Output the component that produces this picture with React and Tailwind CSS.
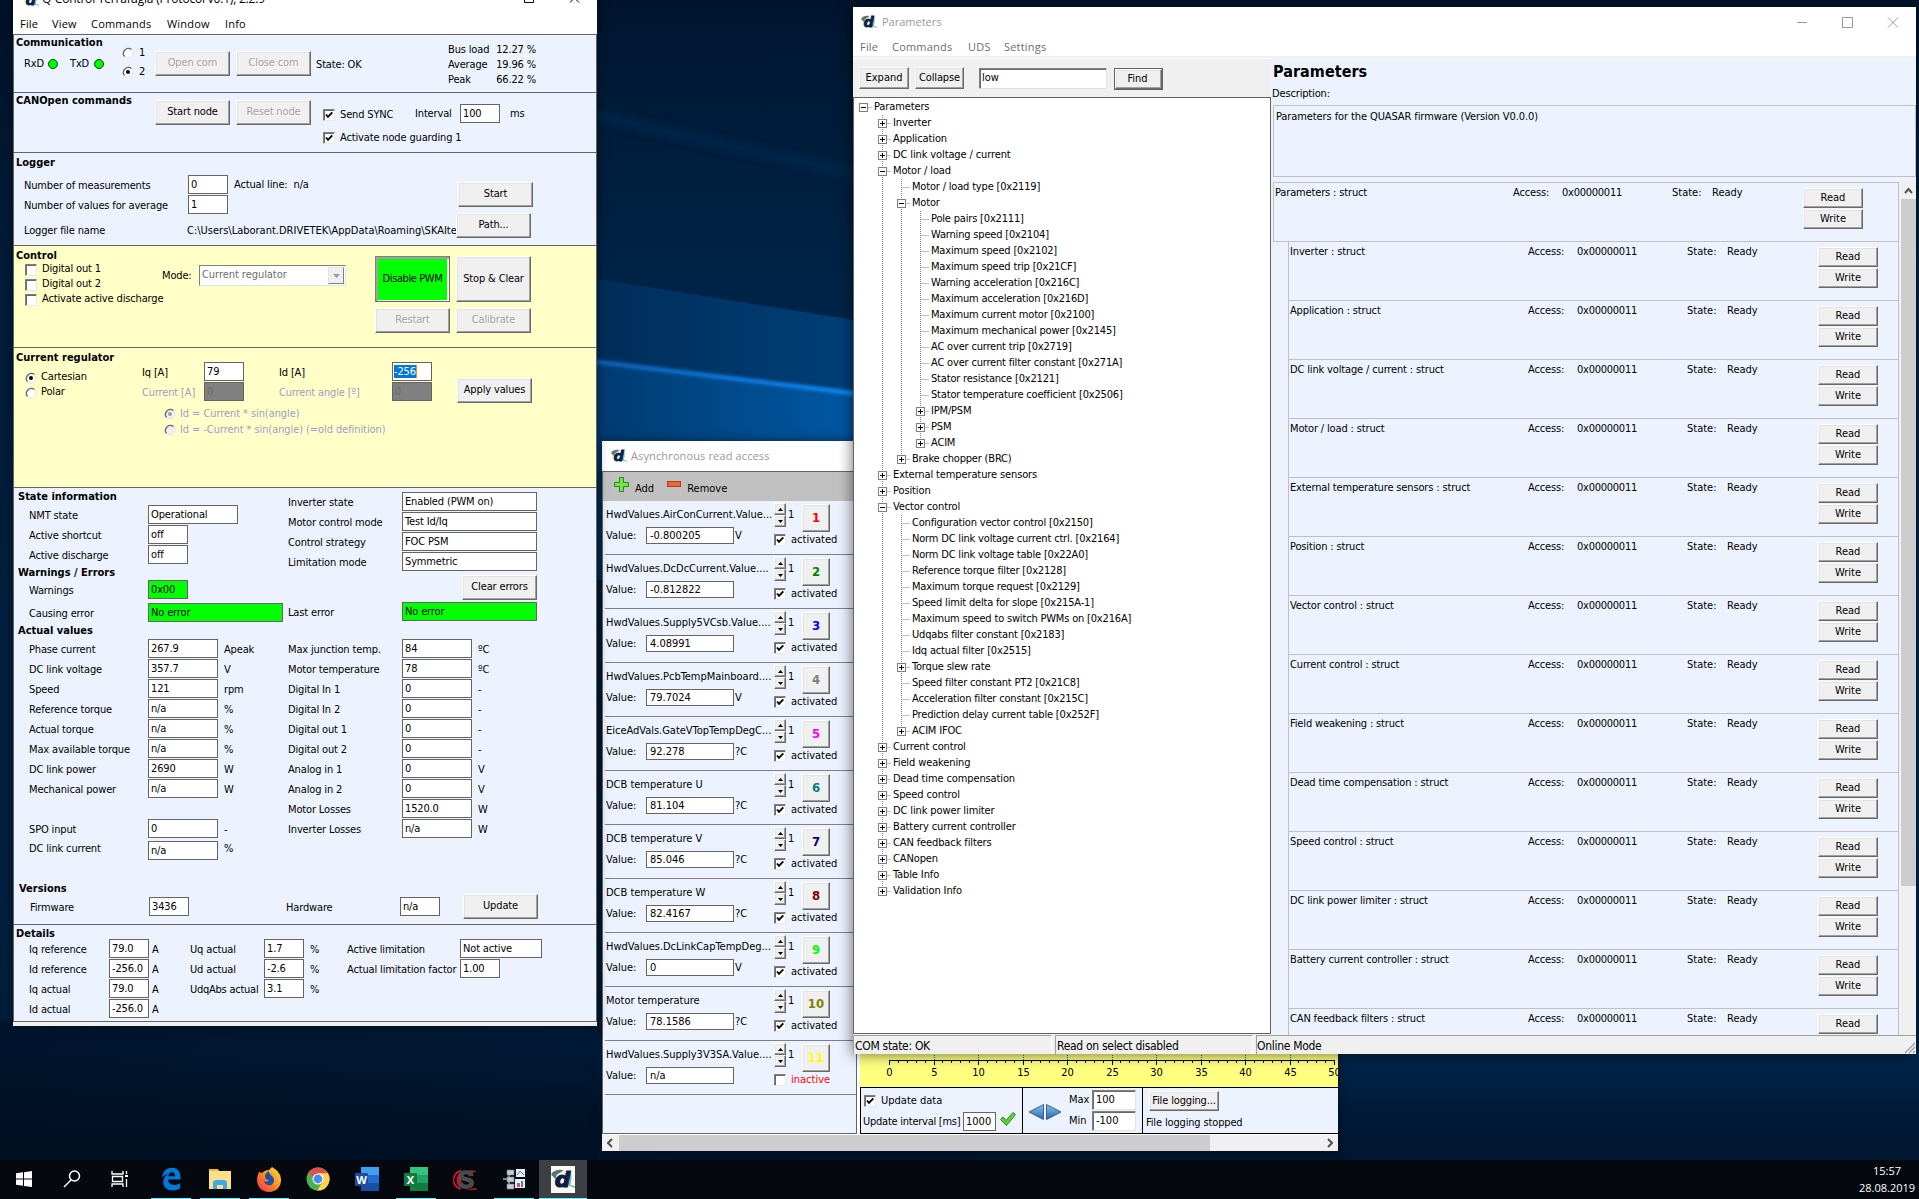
import React from "react";

const cx = (...c) => c.filter(Boolean).join(" ");

// ---------- shared controls ----------

function Logo({ size = 16 }) {
  return (
    <svg width={size} height={size} viewBox="0 0 16 16" className="shrink-0 overflow-visible">
      <path d="M0 5C1.500 2 5.500 1.300 8.500 2.200L5.500 4.200C3.500 5 3 6.500 3.500 8.500z" fill="#4f7d74" />
      <path d="M12.500 3.500c1 2.500 1 5-.3 8.500M12 12l4 1.500" stroke="#8fb0a8" strokeWidth="1" fill="none" />
      <text x="2.500" y="13" fontFamily="DejaVu Sans" fontSize="14.500" fontWeight="bold" fontStyle="italic" fill="#0a1f44" stroke="#0a1f44" strokeWidth=".8">d</text>
    </svg>
  );
}

function Button({ className, disabled, children }) {
  return (
    <button
      className={cx(
        "shrink-0 flex items-center justify-center whitespace-nowrap border border-t-white border-l-white border-r-[#696969] border-b-[#696969] bg-[#f0f0f0] shadow-[inset_-1px_-1px_0_#a0a0a0,inset_1px_1px_0_#e3e3e3]",
        disabled && "text-[#a0a0a0] [text-shadow:1px_1px_0_#fff]",
        className
      )}
    >
      {children}
    </button>
  );
}

function Box({ className = "w-10", children }) {
  return (
    <div className={cx("shrink-0 h-[19px] border border-[#646464] pl-[2px] leading-[17px] whitespace-nowrap overflow-hidden", className, !/bg-/.test(className) && "bg-white")}>
      {children}
    </div>
  );
}

function Check({ checked }) {
  return (
    <span className="shrink-0 w-3 h-3 border border-t-[#808080] border-l-[#808080] border-r-[#e8e8e8] border-b-[#e8e8e8] bg-white shadow-[inset_1px_1px_0_#696969]">
      {checked && (
        <svg width="10" height="10" viewBox="0 0 10 10" className="block">
          <path d="M2 4.500L4 6.800 8.300 2.300" stroke="#000" strokeWidth="1.900" fill="none" />
        </svg>
      )}
    </span>
  );
}

function Radio({ checked, disabled }) {
  return (
    <svg width="12" height="12" viewBox="0 0 12 12" className="shrink-0">
      <circle cx="6" cy="6" r="5" fill={disabled ? "#f0f0f0" : "#fff"} stroke="#e3e3e3" />
      <path d="M2.500 9.500A5 5 0 0 1 9.500 2.500" stroke="#696969" strokeWidth="1.300" fill="none" />
      {checked && <circle cx="6" cy="6" r="2" fill={disabled ? "#a0a0a0" : "#000"} />}
    </svg>
  );
}

function Title({ className, children }) {
  return <div className={cx("font-bold tracking-normal whitespace-nowrap", className)}>{children}</div>;
}

const MUTED = "text-[#a0a0a0] [text-shadow:1px_1px_0_#fff]";

// ---------- main window ----------

function Section({ className, children }) {
  return <section className={cx("flex border-t border-[#646464]", className)}>{children}</section>;
}

function Field({ label, value, unit, box = "w-10", labelClass = "w-[119px]", className }) {
  return (
    <div className={cx("flex h-5", className)}>
      <span className={cx("shrink-0 leading-[21px]", labelClass)}>{label}</span>
      <Box className={box}>{value}</Box>
      {unit && <span className="ml-1.5 leading-[21px]">{unit}</span>}
    </div>
  );
}

function Communication() {
  return (
    <Section className="h-[58px]">
      <div className="w-[108px] pl-0.5">
        <Title className="h-[17px] leading-[15px]">Communication</Title>
        <div className="flex items-center pl-2 mt-1 h-4">
          <span className="w-[24px]">RxD</span>
          <span className="w-2.5 h-2.5 rounded-full border border-[#004000] bg-[#00ff00]" />
          <span className="w-[24px] ml-3">TxD</span>
          <span className="w-2.5 h-2.5 rounded-full border border-[#004000] bg-[#00ff00]" />
        </div>
      </div>
      <div className="w-[33px] pt-2.5">
        <div className="flex items-center gap-[5px] h-4"><Radio /> 1</div>
        <div className="flex items-center gap-[5px] h-4 mt-[3px]"><Radio checked /> 2</div>
      </div>
      <div className="flex gap-1.5 pt-4">
        <Button disabled className="w-[75px] h-[25px]">Open com</Button>
        <Button disabled className="w-[75px] h-[25px]">Close com</Button>
        <span className="leading-[27px] -ml-px">State: OK</span>
      </div>
      <div className="ml-auto mr-[60px] w-[88px] pt-[7px]">
        {[["Bus load", "12.27 %"], ["Average", "19.96 %"], ["Peak", "66.22 %"]].map(([k, v]) => (
          <div key={k} className="flex justify-between h-[15px] leading-[15px]"><span>{k}</span><span>{v}</span></div>
        ))}
      </div>
    </Section>
  );
}

function CanOpen() {
  return (
    <Section className="h-[60px]">
      <Title className="w-[141px] pl-0.5 leading-[15px]">CANOpen commands</Title>
      <div className="flex gap-1.5 pt-[7px]">
        <Button className="w-[75px] h-[25px]">Start node</Button>
        <Button disabled className="w-[75px] h-[25px]">Reset node</Button>
      </div>
      <div className="pl-3 pt-[11px]">
        <div className="flex h-5">
          <div className="flex w-[92px] items-center gap-[5px] pt-0.5"><Check checked /><span>Send SYNC</span></div>
          <span className="w-[45px] leading-5">Interval</span>
          <Box>100</Box>
          <span className="ml-2.5 leading-5">ms</span>
        </div>
        <div className="flex items-center gap-[5px] h-5 mt-1"><Check checked /><span>Activate node guarding 1</span></div>
      </div>
    </Section>
  );
}

function Logger() {
  return (
    <Section className="h-[93px]">
      <div className="w-[442px] pl-2.5">
        <Title className="-ml-2 h-[22px] pt-0.5 leading-4">Logger</Title>
        <div className="flex">
          <Field label="Number of measurements" value="0" labelClass="w-[164px]" />
          <span className="ml-1.5 leading-5 whitespace-pre">Actual line:  n/a</span>
        </div>
        <Field label="Number of values for average" value="1" labelClass="w-[164px]" />
        <div className="flex h-5 mt-[5px] leading-5 pt-px">
          <span className="shrink-0 w-[163px]">Logger file name</span>
          <span className="flex-1 overflow-hidden whitespace-nowrap tracking-normal">C:\Users\Laborant.DRIVETEK\AppData\Roaming\SKAIte</span>
        </div>
      </div>
      <div className="pt-[29px]">
        <Button className="w-[75px] h-[25px] ml-0.5">Start</Button>
        <Button className="w-[75px] h-[25px] mt-1.5">Path...</Button>
      </div>
    </Section>
  );
}

function Control() {
  return (
    <Section className="h-[102px] bg-[#ffffc8]">
      <div className="w-[148px] pl-[11px]">
        <Title className="-ml-[9px] h-4 leading-[19px]">Control</Title>
        {["Digital out 1", "Digital out 2", "Activate active discharge"].map((t) => (
          <div key={t} className="flex items-center gap-[5px] h-[15px] whitespace-nowrap"><Check /><span>{t}</span></div>
        ))}
      </div>
      <div className="flex w-[213px] h-[21px] mt-[19px]">
        <span className="w-[37px] leading-[21px]">Mode:</span>
        <div className="flex w-[147px] justify-between items-center border border-[#808080] border-r-[#e3e3e3] border-b-[#e3e3e3] bg-white pl-0.5 pr-px text-[#6d6d6d] tracking-[-0.05px]">
          <span>Current regulator</span>
          <span className="w-4 h-[17px] flex items-center justify-center bg-[#f0f0f0] border border-t-[#e3e3e3] border-l-[#e3e3e3] border-r-[#808080] border-b-[#808080]">
            <svg width="7" height="4"><path d="M0 0h7L3.500 4z" fill="#9a9a9a" /></svg>
          </span>
        </div>
      </div>
      <div className="grid grid-cols-[75px_75px] grid-rows-[46px_25px] gap-1.5 pt-[10px]">
        <div className="flex border border-r-[#696969] border-b-[#696969] border-[#808080] bg-white shadow-[inset_2px_2px_0_#a0a0a0] pt-0.5 pl-0.5 pr-0.5 pb-px">
          <div className="flex-1 bg-[#00ff00] flex items-center justify-center whitespace-nowrap tracking-[-0.4px]">Disable PWM</div>
        </div>
        <Button>Stop &amp; Clear</Button>
        <Button disabled>Restart</Button>
        <Button disabled>Calibrate</Button>
      </div>
    </Section>
  );
}

function CurrentRegulator() {
  return (
    <Section className="h-[140px] bg-[#ffffc8]">
      <div className="w-[128px] pl-[11px]">
        <Title className="-ml-[9px] h-[22px] leading-[19px]">Current regulator</Title>
        <div className="flex items-center gap-1 h-[15px]"><Radio checked /><span>Cartesian</span></div>
        <div className="flex items-center gap-1 h-[15px]"><Radio /><span>Polar</span></div>
      </div>
      <div className="w-[315px] pt-3.5">
        <div className="flex">
          <div className="w-[137px]">
            <Field label="Iq [A]" value="79" labelClass="w-[62px]" />
            <Field label={<span className={MUTED}>Current [A]</span>} value="0" box="w-10 bg-[#808080] text-[#696969]" labelClass="w-[62px]" />
          </div>
          <div>
            <Field label="Id [A]" value={<span className="bg-[#0078d7] text-white border-r border-[#ff8728] -ml-px inline-block h-[13px] mt-px leading-[13px]">-256</span>} labelClass="w-[113px]" />
            <Field label={<span className={MUTED}>Current angle [º]</span>} value="0" box="w-10 bg-[#808080] text-[#696969]" labelClass="w-[113px]" />
          </div>
        </div>
        <div className={cx("pl-[22px] pt-1 tracking-[-0.08px]", MUTED)}>
          <div className="flex items-center gap-1 h-4"><Radio checked disabled /><span>Id = Current * sin(angle)</span></div>
          <div className="flex items-center gap-1 h-4"><Radio disabled /><span>Id = -Current * sin(angle) (=old definition)</span></div>
        </div>
      </div>
      <Button className="w-[75px] h-[25px] mt-[30px]">Apply values</Button>
    </Section>
  );
}

const ACTUAL_LEFT = [
  ["Phase current", "267.9", "Apeak"],
  ["DC link voltage", "357.7", "V"],
  ["Speed", "121", "rpm"],
  ["Reference torque", "n/a", "%"],
  ["Actual torque", "n/a", "%"],
  ["Max available torque", "n/a", "%"],
  ["DC link power", "2690", "W"],
  ["Mechanical power", "n/a", "W"],
];

const ACTUAL_RIGHT = [
  ["Max junction temp.", "84", "ºC"],
  ["Motor temperature", "78", "ºC"],
  ["Digital In 1", "0", "-"],
  ["Digital In 2", "0", "-"],
  ["Digital out 1", "0", "-"],
  ["Digital out 2", "0", "-"],
  ["Analog in 1", "0", "V"],
  ["Analog in 2", "0", "V"],
  ["Motor Losses", "1520.0", "W"],
  ["Inverter Losses", "n/a", "W"],
];

function StateInformation() {
  return (
    <Section className="h-[437px]">
      <div className="w-[274px] pl-[15px]">
        <Title className="-ml-[11px] h-[17px] leading-[17px]">State information</Title>
        <Field label="NMT state" value="Operational" box="w-[90px]" />
        <Field label="Active shortcut" value="off" />
        <Field label="Active discharge" value="off" />
        <Title className="-ml-[11px] h-[15px] leading-[15px]">Warnings / Errors</Title>
        <Field label="Warnings" value="0x00" box="w-10 bg-[#00ff00]" />
        <Field label="Causing error" value="No error" box="w-[135px] bg-[#00ff00]" className="mt-[3px]" />
        <Title className="-ml-[11px] h-4 leading-4">Actual values</Title>
        {ACTUAL_LEFT.map(([l, v, u]) => <Field key={l} label={l} value={v} unit={u} box="w-[70px]" />)}
        <Field label="SPO input" value="0" unit="-" box="w-[70px]" className="mt-5" />
        <Field label={<span className="block -mt-[3px]">DC link current</span>} value="n/a" unit={<span className="block -mt-[3px]">%</span>} box="w-[70px]" className="mt-[2px]" />
        <Title className="-ml-[10px] mt-5 h-4 leading-4">Versions</Title>
        <Field label="Firmware" value="3436" className="pl-px" />
      </div>
      <div className="pt-1">
        <Field label="Inverter state" value="Enabled (PWM on)" box="w-[135px]" labelClass="w-[114px]" />
        <Field label="Motor control mode" value="Test Id/Iq" box="w-[135px]" labelClass="w-[114px]" />
        <Field label="Control strategy" value="FOC PSM" box="w-[135px]" labelClass="w-[114px]" />
        <Field label="Limitation mode" value="Symmetric" box="w-[135px]" labelClass="w-[114px]" />
        <div className="flex ml-[174px] mt-[3px]"><Button className="w-[75px] h-[25px]">Clear errors</Button></div>
        <Field label="Last error" value="No error" box="w-[135px] bg-[#00ff00]" labelClass="w-[114px]" className="mt-[2px]" />
        <div className="mt-[17px]">
          {ACTUAL_RIGHT.map(([l, v, u]) => <Field key={l} label={l} value={v} unit={u} box="w-[70px]" labelClass="w-[114px]" />)}
        </div>
        <div className="flex mt-[58px] -ml-0.5">
          <Field label="Hardware" value="n/a" labelClass="w-[114px]" />
          <Button className="w-[75px] h-[25px] -mt-[3px] ml-[23px]">Update</Button>
        </div>
      </div>
    </Section>
  );
}

function Details() {
  return (
    <Section className="h-[98px] border-b">
      <div className="w-[176px] pl-[15px]">
        <Title className="-ml-[13px] h-3.5 leading-[18px]">Details</Title>
        <Field label="Iq reference" value="79.0" unit={<span className="-ml-[3px]">A</span>} labelClass="w-[80px]" />
        <Field label="Id reference" value="-256.0" unit={<span className="-ml-[3px]">A</span>} labelClass="w-[80px]" />
        <Field label="Iq actual" value="79.0" unit={<span className="-ml-[3px]">A</span>} labelClass="w-[80px]" />
        <Field label="Id actual" value="-256.0" unit={<span className="-ml-[3px]">A</span>} labelClass="w-[80px]" />
      </div>
      <div className="w-[157px] pt-3.5">
        <Field label="Uq actual" value="1.7" unit="%" labelClass="w-[74px]" />
        <Field label="Ud actual" value="-2.6" unit="%" labelClass="w-[74px]" />
        <Field label="UdqAbs actual" value="3.1" unit="%" labelClass="w-[74px] tracking-[-0.25px]" />
      </div>
      <div className="pt-3.5">
        <Field label="Active limitation" value="Not active" box="w-[82px]" labelClass="w-[113px]" />
        <Field label="Actual limitation factor" value="1.00" labelClass="w-[113px]" />
      </div>
    </Section>
  );
}

function MainWindow() {
  return (
    <div className="absolute left-[13px] top-[-15px] w-[584px] h-[1041px] bg-[#f0f0f0] shadow-[0_0_10px_rgba(0,0,0,0.5)] tracking-[-0.15px]">
      <div className="flex items-center h-[30px] bg-white pl-2.5 pr-[17px] font-['Open_Sans'] text-[12px]">
        <Logo />
        <span className="ml-[3px] -mt-[3px] whitespace-nowrap tracking-[-0.2px]">Q-Control Terrafugia (Protocol v0.1), 2.2.9</span>
        <svg width="56" height="11" viewBox="0 0 56 11" className="ml-auto -mt-3 overflow-visible" fill="none" stroke="#000">
          <path d="M.5 4.500h9v9h-9zM46 4.500l9 9M55 4.500l-9 9" />
        </svg>
      </div>
      <nav className="flex h-[19px] bg-white pl-[7px] font-['Open_Sans'] text-[11px] leading-[17px] tracking-[0.2px]">
        <span className="w-8">File</span>
        <span className="w-[39px]">View</span>
        <span className="w-[76px]">Commands</span>
        <span className="w-[58px]">Window</span>
        <span>Info</span>
      </nav>
      <div className="border-x border-[#646464] bg-[#ecf3ff]">
        <Communication />
        <CanOpen />
        <Logger />
        <Control />
        <CurrentRegulator />
        <StateInformation />
        <Details />
      </div>
    </div>
  );
}

// ---------- asynchronous read access ----------

const CHANNELS = [
  ["HwdValues.AirConCurrent.Value...", "-0.800205", "V", "text-[#ff0000]"],
  ["HwdValues.DcDcCurrent.Value....", "-0.812822", "", "text-[#008000]"],
  ["HwdValues.Supply5VCsb.Value....", "4.08991", "", "text-[#0000ff]"],
  ["HwdValues.PcbTempMainboard....", "79.7024", "V", "text-[#808080]"],
  ["EiceAdVals.GateVTopTempDegC...", "92.278", "?C", "text-[#ff00ff]"],
  ["DCB temperature U", "81.104", "?C", "text-[#008080]"],
  ["DCB temperature V", "85.046", "?C", "text-[#000080]"],
  ["DCB temperature W", "82.4167", "?C", "text-[#800000]"],
  ["HwdValues.DcLinkCapTempDeg...", "0", "V", "text-[#00ff00]"],
  ["Motor temperature", "78.1586", "?C", "text-[#808000]"],
  ["HwdValues.Supply3V3SA.Value....", "n/a", "", "text-[#ffff00]"],
];

function Channel({ index, name, value, unit, color }) {
  const active = index !== 11;
  return (
    <div className="flex h-[54px] ml-0.5 pl-px border-b border-[#808080]">
      <div className="w-[168px]">
        <div className="h-[26px] leading-[27px] whitespace-nowrap tracking-[-0.02px]">{name}</div>
        <div className="flex h-[17px]">
          <span className="w-10 leading-[17px]">Value:</span>
          <div className="w-[88px] border border-[#646464] bg-white pl-[3px] leading-[15px]">{value}</div>
          <span className="ml-px leading-[17px]">{unit}</span>
        </div>
      </div>
      <div className="pt-[2px]">
        <div className="flex h-[30px]">
          <div className="w-3">
            <Button className="w-3 h-3"><svg width="5" height="3"><path d="M0 3h5L2.500 0z" /></svg></Button>
            <Button className="w-3 h-3"><svg width="5" height="3"><path d="M0 0h5L2.500 3z" /></svg></Button>
          </div>
          <span className="w-4 pl-[2px] leading-[23px]">1</span>
          <Button className={cx("w-7 h-7 mt-px font-bold text-[13px]", color)}>{index}</Button>
        </div>
        <div className="flex items-center gap-[5px] h-[14px]">
          <Check checked={active} />
          <span className={active ? "" : "text-[#ff0000]"}>{active ? "activated" : "inactive"}</span>
        </div>
      </div>
    </div>
  );
}

function Axis() {
  const ticks = Array.from({ length: 51 }, (_, i) => i);
  return (
    <svg width="478" height="32" className="block" fontFamily="DejaVu Sans Condensed" fontSize="11">
      <path d="M29 5.500H474.500" stroke="#000" />
      {ticks.map((i) => {
        const x = Math.round(29 + i * 8.9) + 0.5;
        const major = i % 5 === 0;
        return (
          <g key={i}>
            {major && i > 0 && i < 50 && <path d={`M${x} 0V5`} stroke="#008080" strokeDasharray="1 1" />}
            <path d={`M${x} 5V${major ? 10 : 8}`} stroke="#000" />
            {major && <text x={x} y="21" textAnchor="middle">{i}</text>}
          </g>
        );
      })}
    </svg>
  );
}

function AsyncWindow() {
  return (
    <div className="absolute left-[602px] top-[441px] w-[736px] h-[710px] bg-white shadow-[0_0_10px_rgba(0,0,0,0.5)] flex flex-col">
      <div className="flex items-center h-[30px] pl-[9px] gap-1 font-['Open_Sans'] text-[11px] text-[#999] tracking-[0.13px]">
        <Logo /> Asynchronous read access
      </div>
      <div className="flex flex-1">
        <div className="w-[255px] border border-[#646464] bg-[#ecf3ff]">
          <div className="flex items-center h-[29px] bg-[#c0c0c0] pl-[11px]">
            <svg width="15" height="15" viewBox="0 0 15 15" className="-mt-1">
              <path d="M5.500.500h4v5h5v4h-5v5h-4v-5h-5v-4h5z" fill="#7be04a" stroke="#1f8a1f" />
            </svg>
            <span className="ml-1.5 mt-[5px]">Add</span>
            <span className="ml-[13px] -mt-1.5 w-3.5 h-1.5 bg-[#f0643c] border border-[#b43c1e]" />
            <span className="ml-1.5 mt-[5px]">Remove</span>
          </div>
          {CHANNELS.map(([name, value, unit, color], i) => (
            <Channel key={name} index={i + 1} name={name} value={value} unit={unit} color={color} />
          ))}
        </div>
        <div className="flex-1 ml-[3px] flex flex-col overflow-hidden">
          <div className="flex-1 bg-[#ffff80] flex items-end"><Axis /></div>
          <div className="flex h-[47px] border-y border-l border-black bg-[#ecf3ff]">
            <div className="w-[162px] border-r border-black pl-[2px]">
              <div className="flex items-center gap-[5px] h-5 mt-[3px] pl-px"><Check checked /><span>Update data</span></div>
              <div className="flex mt-px">
                <span className="w-[100px] leading-[19px] whitespace-nowrap tracking-[-0.25px]">Update interval [ms]</span>
                <Box className="w-[33px]">1000</Box>
                <svg width="16" height="14" viewBox="0 0 16 14" className="ml-1">
                  <path d="M.5 7.500L3 5l3 3.500L13 .5 15.500 2.500 6.500 13.500z" fill="#5fd03c" stroke="#2c8a1c" />
                </svg>
              </div>
            </div>
            <div className="flex w-[120px] border-r border-black pl-1.5">
              <svg width="32" height="16" viewBox="0 0 32 16" className="mt-[16px]">
                <defs>
                  <linearGradient id="arrow" x1="0" y1="0" x2="0" y2="1">
                    <stop offset="0" stopColor="#8cc0ea" />
                    <stop offset="1" stopColor="#2468a8" />
                  </linearGradient>
                </defs>
                <path d="M0 8L14.500.500v15z" fill="url(#arrow)" stroke="#1c4a7c" strokeWidth=".8" />
                <path d="M32 8L17.500.500v15z" fill="url(#arrow)" stroke="#1c4a7c" strokeWidth=".8" />
              </svg>
              <div className="pl-2 pt-[2px]">
                {[["Max", "100"], ["Min", "-100"]].map(([k, v]) => (
                  <div key={k} className="flex h-[21px]">
                    <span className="w-[23px] leading-5">{k}</span>
                    <div className="w-[44px] h-5 border border-t-[#808080] border-l-[#808080] border-r-[#e3e3e3] border-b-[#e3e3e3] shadow-[inset_1px_1px_0_#696969] bg-white pl-[3px] leading-[18px]">{v}</div>
                  </div>
                ))}
              </div>
            </div>
            <div className="pl-[3px] pt-[3px] tracking-[-0.15px]">
              <Button className="w-[70px] h-5 ml-[3px]">File logging...</Button>
              <div className="leading-4 mt-1">File logging stopped</div>
            </div>
          </div>
        </div>
      </div>
      <div className="flex items-center h-4 mt-px bg-[#f0f0f0]">
        <svg width="17" height="16" fill="none" stroke="#505050" strokeWidth="2"><path d="M10 4L6 8l4 4" /></svg>
        <div className="w-[591px] h-4 bg-[#cdcdcd]" />
        <svg width="17" height="16" fill="none" stroke="#505050" strokeWidth="2" className="ml-auto"><path d="M7 4l4 4-4 4" /></svg>
      </div>
    </div>
  );
}

// ---------- parameters window ----------

// [depth, marker, label]
const TREE = [
  [0, "-", "Parameters"],
  [1, "+", "Inverter"],
  [1, "+", "Application"],
  [1, "+", "DC link voltage / current"],
  [1, "-", "Motor / load"],
  [2, "", "Motor / load type [0x2119]"],
  [2, "-", "Motor"],
  [3, "", "Pole pairs [0x2111]"],
  [3, "", "Warning speed [0x2104]"],
  [3, "", "Maximum speed [0x2102]"],
  [3, "", "Maximum speed trip [0x21CF]"],
  [3, "", "Warning acceleration [0x216C]"],
  [3, "", "Maximum acceleration [0x216D]"],
  [3, "", "Maximum current motor [0x2100]"],
  [3, "", "Maximum mechanical power [0x2145]"],
  [3, "", "AC over current trip [0x2719]"],
  [3, "", "AC over current filter constant [0x271A]"],
  [3, "", "Stator resistance [0x2121]"],
  [3, "", "Stator temperature coefficient [0x2506]"],
  [3, "+", "IPM/PSM"],
  [3, "+", "PSM"],
  [3, "+", "ACIM"],
  [2, "+", "Brake chopper (BRC)"],
  [1, "+", "External temperature sensors"],
  [1, "+", "Position"],
  [1, "-", "Vector control"],
  [2, "", "Configuration vector control [0x2150]"],
  [2, "", "Norm DC link voltage current ctrl. [0x2164]"],
  [2, "", "Norm DC link voltage table [0x22A0]"],
  [2, "", "Reference torque filter [0x2128]"],
  [2, "", "Maximum torque request [0x2129]"],
  [2, "", "Speed limit delta for slope [0x215A-1]"],
  [2, "", "Maximum speed to switch PWMs on [0x216A]"],
  [2, "", "Udqabs filter constant [0x2183]"],
  [2, "", "Idq actual filter [0x2515]"],
  [2, "+", "Torque slew rate"],
  [2, "", "Speed filter constant PT2 [0x21C8]"],
  [2, "", "Acceleration filter constant [0x215C]"],
  [2, "", "Prediction delay current table [0x252F]"],
  [2, "+", "ACIM IFOC"],
  [1, "+", "Current control"],
  [1, "+", "Field weakening"],
  [1, "+", "Dead time compensation"],
  [1, "+", "Speed control"],
  [1, "+", "DC link power limiter"],
  [1, "+", "Battery current controller"],
  [1, "+", "CAN feedback filters"],
  [1, "+", "CANopen"],
  [1, "+", "Table Info"],
  [1, "+", "Validation Info"],
];

// does the branch at this level go on below row i?
function continues(i, level) {
  for (let j = i + 1; j < TREE.length; j++) {
    if (TREE[j][0] < level) return false;
    if (TREE[j][0] === level) return true;
  }
  return false;
}

function TreeRow({ i }) {
  const [depth, marker, label] = TREE[i];
  const cells = [];
  for (let level = 0; level <= depth; level++) {
    const own = level === depth;
    const more = level > 0 && continues(i, level);
    cells.push(
      <svg key={level} width="19" height="16" className="shrink-0" stroke="#808080" fill="none">
        {level > 0 && (own || more) && <path d={more ? "M9.500 0V16" : "M9.500 0V8"} strokeDasharray="1 1" />}
        {own && <path d="M9.500 8.500H18" strokeDasharray="1 1" />}
        {own && marker && (
          <>
            <rect x="5.500" y="4.500" width="8" height="8" fill="#fff" />
            <path d={marker === "+" ? "M7 8.500h5M9.500 6v5" : "M7 8.500h5"} stroke="#000" />
          </>
        )}
      </svg>
    );
  }
  return (
    <div className="flex h-4">
      {cells}
      <span className={cx("ml-px leading-4 whitespace-nowrap", depth < 2 ? "tracking-[-0.12px]" : "tracking-[-0.18px]")}>{label}</span>
    </div>
  );
}

const STRUCTS = [
  "Inverter", "Application", "DC link voltage / current", "Motor / load", "External temperature sensors",
  "Position", "Vector control", "Current control", "Field weakening", "Dead time compensation",
  "Speed control", "DC link power limiter", "Battery current controller", "CAN feedback filters",
];

function Struct({ name, root }) {
  return (
    <div className={cx("flex shrink-0 h-[59px] border-b border-l border-[#c0c0c0] pl-px", !root && "ml-[15px]")}>
      <span className="w-[238px] leading-[20px] tracking-[-0.15px]">{name} : struct</span>
      <span className="w-[49px] leading-[20px] tracking-[-0.15px]">Access:</span>
      <span className="w-[110px] leading-[20px] tracking-[-0.25px]">0x00000011</span>
      <span className="w-10 leading-[20px]">State:</span>
      <span className="w-[91px] leading-[20px]">Ready</span>
      <div className="flex flex-col gap-px pt-[5px]">
        <Button className="w-[60px] h-5 pt-px">Read</Button>
        <Button className="w-[60px] h-5 pt-px">Write</Button>
      </div>
    </div>
  );
}

function ParametersWindow() {
  return (
    <div className="absolute left-[853px] top-[7px] w-[1063px] h-[1047px] bg-[#f0f0f0] shadow-[0_0_14px_rgba(0,0,0,0.6)] flex flex-col">
      <div className="flex items-center h-[30px] bg-white pl-2 pr-[17px] font-['Open_Sans'] text-[11px] text-[#999]">
        <Logo />
        <span className="ml-[5px]">Parameters</span>
        <svg width="102" height="11" viewBox="0 0 102 11" fill="none" stroke="#999" className="ml-auto">
          <path d="M0 5.500h10M45.500.500h10v10h-10zM91 .500l10 10M101 .500l-10 10" />
        </svg>
      </div>
      <nav className="flex h-[19px] bg-white pl-[7px] font-['Open_Sans'] text-[11px] text-[#6d6d6d] leading-[19px] tracking-[0.2px]">
        <span className="w-8">File</span>
        <span className="w-[76px]">Commands</span>
        <span className="w-9">UDS</span>
        <span>Settings</span>
      </nav>
      <div className="flex h-[979px]">
        <div className="w-[418px] flex flex-col pt-0.5">
          <div className="flex h-[39px] pt-2 pl-1.5 border-t border-white">
            <Button className="w-[50px] h-[22px]">Expand</Button>
            <Button className="w-[49px] h-[22px] ml-1.5 tracking-[-0.15px]">Collapse</Button>
            <div className="w-[128px] h-[21px] mt-px ml-[15px] border border-t-[#808080] border-l-[#808080] border-r-[#e3e3e3] border-b-[#e3e3e3] shadow-[inset_1px_1px_0_#696969] bg-white pl-[2px] leading-[17px]">low</div>
            <div className="ml-[7px] mt-px w-[49px] h-[22px] border border-[#646464] flex"><Button className="flex-1 pr-0.5">Find</Button></div>
          </div>
          <div className="flex-1 mb-px border border-[#646464] bg-white pt-px">
            {TREE.map((row, i) => <TreeRow key={row[2] + i} i={i} />)}
          </div>
        </div>
        <div className="flex-1 flex flex-col bg-[#ecf3ff] mt-0.5">
          <h1 className="pl-0.5 h-[27px] leading-[27px] font-bold text-[16px] tracking-[0.05px]">Parameters</h1>
          <div className="pl-px h-5 leading-[18px] tracking-[-0.15px]">Description:</div>
          <div className="ml-0.5 h-[72px] border border-[#c0c0c0] pl-0.5 leading-[21px] tracking-[-0.1px]">Parameters for the QUASAR firmware (Version V0.0.0)</div>
          <div className="flex h-[853px] mt-[5px]">
            <div className="w-[626px] ml-0.5 border-t border-r border-[#c0c0c0] overflow-hidden flex flex-col">
              <Struct name="Parameters" root />
              {STRUCTS.map((s) => <Struct key={s} name={s} />)}
            </div>
            <div className="ml-0.5 flex-1 bg-[#f0f0f0] flex flex-col">
              <svg width="15" height="17" fill="none" stroke="#505050" strokeWidth="2"><path d="M4 11l3.500-4 3.500 4" /></svg>
              <div className="h-[687px] w-[15px] bg-[#cdcdcd]" />
            </div>
          </div>
        </div>
      </div>
      <div className="flex gap-[3px] h-[19px] text-[12px] leading-[20px] tracking-[-0.3px]">
        <div className="w-[199px] border-t border-l border-[#a0a0a0] border-r border-r-white pl-px">COM state: OK</div>
        <div className="w-[198px] border-t border-l border-[#a0a0a0] border-r border-r-white pl-px">Read on select disabled</div>
        <div className="flex-1 flex justify-between border-t border-l border-[#a0a0a0]">
          Online Mode
          <svg width="12" height="12" stroke="#a0a0a0" strokeWidth="1.300" className="mt-1.5"><path d="M1 11L11 1M5 11l6-6M9 11l2-2" /></svg>
        </div>
      </div>
    </div>
  );
}

// ---------- desktop ----------

function Wallpaper() {
  return (
    <svg className="absolute inset-0" width="1919" height="1199" viewBox="0 0 1919 1199" preserveAspectRatio="none">
      <defs>
        <linearGradient id="sky" x1="0" y1="0" x2="0" y2="1">
          <stop offset="0" stopColor="#00142e" />
          <stop offset=".08" stopColor="#001b38" />
          <stop offset=".25" stopColor="#002448" />
          <stop offset=".6" stopColor="#002850" />
          <stop offset=".88" stopColor="#00264c" />
          <stop offset=".93" stopColor="#001a36" />
          <stop offset="1" stopColor="#00112a" />
        </linearGradient>
        <linearGradient id="edge" x1="0" y1="0" x2="1" y2="0">
          <stop offset="0" stopColor="#000c1c" stopOpacity=".5" />
          <stop offset=".3" stopColor="#000c1c" stopOpacity=".3" />
          <stop offset=".6" stopColor="#000c1c" stopOpacity="0" />
        </linearGradient>
        <linearGradient id="haze" gradientUnits="userSpaceOnUse" x1="590" y1="0" x2="860" y2="0">
          <stop offset="0" stopColor="#002c58" />
          <stop offset="1" stopColor="#004078" />
        </linearGradient>
        <linearGradient id="floor" gradientUnits="userSpaceOnUse" x1="590" y1="0" x2="860" y2="0">
          <stop offset="0" stopColor="#003a70" />
          <stop offset="1" stopColor="#0058a4" />
        </linearGradient>
        <linearGradient id="beam" gradientUnits="userSpaceOnUse" x1="590" y1="0" x2="860" y2="0">
          <stop offset="0" stopColor="#0a5cb0" />
          <stop offset="1" stopColor="#0a86f0" />
        </linearGradient>
        <filter id="soft"><feGaussianBlur stdDeviation="1.500" /></filter>
        <filter id="softer"><feGaussianBlur stdDeviation="4" /></filter>
      </defs>
      <rect width="1919" height="1199" fill="url(#sky)" />
      <rect width="597" height="1199" fill="#000c1c" opacity=".3" />
      <rect y="1020" width="1919" height="179" fill="url(#edge)" />
      <path d="M590 114L860 175" stroke="#023058" strokeWidth="9" filter="url(#softer)" opacity=".5" />
      <path d="M590 278L860 321V700H590z" fill="url(#haze)" />
      <path d="M590 361L860 394V470H590z" fill="url(#floor)" />
      <path d="M590 361L860 394" stroke="url(#beam)" strokeWidth="5" filter="url(#soft)" />
      <rect x="595" y="470" width="10" height="140" fill="#00305c" />
      <rect x="595" y="580" width="10" height="460" fill="#001c38" />
    </svg>
  );
}

function Task({ active, open, children }) {
  return (
    <div className={cx("flex flex-col items-center justify-between w-12 h-full", active && "bg-[#3c4045]")}>
      <div className="flex-1 flex items-center">{children}</div>
      <div className={cx("h-px", active ? "w-full" : "w-10", open ? "bg-[#76e7f7]" : "")} />
    </div>
  );
}

function Office({ dark, mid, light, letter }) {
  return (
    <svg width="24" height="24" viewBox="0 0 24 24">
      <rect x="6" y="0" width="18" height="24" rx="1" fill={mid} />
      <path d="M6 0h18v8H6z" fill={light} />
      <path d="M6 16h18v8H6z" fill={dark} />
      <rect x="0" y="6" width="13" height="13" rx="1" fill={dark} />
      <text x="6.500" y="16.500" fontFamily="Open Sans" fontSize="11" fontWeight="bold" fill="#fff" textAnchor="middle">{letter}</text>
    </svg>
  );
}

function Taskbar() {
  return (
    <div className="absolute left-0 bottom-0 w-full h-[39px] flex bg-[#05090f] text-white font-['Open_Sans']">
      <Task>
        <svg width="16" height="16" fill="#fff"><path d="M0 2.300L7 1.300V7.600H0zM8 1.200L16 0V7.600H8zM0 8.500H7V14.800L0 13.800zM8 8.500H16V16L8 14.900z" /></svg>
      </Task>
      <Task>
        <svg width="18" height="18" fill="none" stroke="#fff" strokeWidth="1.500"><circle cx="11.500" cy="6" r="5" /><path d="M8 10L1 17" /></svg>
      </Task>
      <Task>
        <svg width="18" height="18" fill="none" stroke="#fff" strokeWidth="1.300"><path d="M1 1v3h11V1M1 17v-3h11v3M1.500 6.500h10v5h-10zM15.500 1v3M15.500 9v8" /><path d="M14 6h3" strokeWidth="2" /></svg>
      </Task>
      <div className="w-[3px]" />
      <Task open>
        <svg width="20" height="24" viewBox="0 0 22 25"><path d="M1 11C2 4 6 0 12 0c7 0 10 5 9.500 13H8c0 4 3 6 7 6 2 0 4-.6 6-1.700V23c-2 1.200-5 2-8 2-7 0-11-4-10.500-10C3 11 5 8.500 8 7 5 7.500 2.500 9 1 11zM8 9.500h7.500C15.500 6.500 14 5 12 5c-2.300 0-3.700 1.800-4 4.500z" fill="#0078d7" /></svg>
      </Task>
      <div className="w-px" />
      <Task open>
        <svg width="22" height="21" viewBox="0 0 22 21"><path d="M0 0h9l1 2h12v18H0z" fill="#fbe08c" /><path d="M0 0h9v2H0z" fill="#f0b83c" /><path d="M4 20v-7l2-2h10l2 2v7h-4v-4H8v4z" fill="#3fa9e8" /></svg>
      </Task>
      <div className="w-px" />
      <Task open>
        <svg width="24" height="25" viewBox="0 0 24 25">
          <defs><linearGradient id="ff" x1="1" y1="0" x2="0" y2="1"><stop offset="0" stopColor="#ffe63c" /><stop offset=".5" stopColor="#ff8a1e" /><stop offset="1" stopColor="#f0285a" /></linearGradient></defs>
          <path d="M2 5l3 1c2-2 4-3 7-3L15 0c5 3 9 7 9 13 0 7-5 12-12 12S0 20 0 13c0-3 1-6 2-8z" fill="url(#ff)" />
          <path d="M8 9c0-2 2-4 4-5-1 3 5 5 5 9s-3 6-6 5c-2-.5-4-2-4-4 2 1 4 1 5-1-2 0-4-1-4-4z" fill="#1e4fa8" />
        </svg>
      </Task>
      <div className="w-px" />
      <Task>
        <svg width="24" height="24" viewBox="0 0 24 24">
          <circle cx="12" cy="12" r="11.500" fill="#4caf50" />
          <path d="M12 12L2 6.300A11.500 11.500 0 0 1 22 6.300L12 6.500z" fill="#de5246" />
          <path d="M12 6.300h10A11.500 11.500 0 0 1 11 23.500l6-9z" fill="#ffd34e" />
          <circle cx="12" cy="12" r="5.500" fill="#fff" />
          <circle cx="12" cy="12" r="4.400" fill="#4a8af4" />
        </svg>
      </Task>
      <div className="w-px" />
      <Task><Office dark="#1a4fa0" mid="#1e6fd0" light="#41a0ee" letter="W" /></Task>
      <div className="w-px" />
      <Task open><Office dark="#107c41" mid="#21a366" light="#33c481" letter="X" /></Task>
      <div className="w-px" />
      <Task>
        <svg width="25" height="24" viewBox="0 0 25 24">
          <path d="M8 3.500C1 6-1 12 1.500 17c1 2 3 4 6 5" fill="none" stroke="#c01828" strokeWidth="2" />
          <path d="M8 5C2 9 2 17 8 21zM12 22.500l12 .5-1-2zM16 3l8 1-5 2z" fill="#c01828" />
          <text x="13" y="20.500" fontFamily="Liberation Sans" fontSize="24" fontWeight="bold" textAnchor="middle" fill="#4a4a4d" stroke="#4a4a4d" strokeWidth="1.500">S</text>
        </svg>
      </Task>
      <div className="w-px" />
      <Task open>
        <svg width="22" height="21" viewBox="0 0 22 21">
          <path d="M0 10h6M6 4v13M6 4h3M6 17h3" stroke="#8fb4d8" strokeWidth="1.500" fill="none" />
          <path d="M4 1h7v5H4zM4 8h7v5H4zM4 15h7v5H4z" fill="#c8ccd2" stroke="#70767e" strokeWidth=".6" />
          <path d="M13 0h9v8h-9zM12 10h10v9H12z" fill="#e6eef8" />
          <path d="M14 6l3-4 4 4" stroke="#3c78c0" fill="none" />
          <path d="M14 14h3v4h-3z" fill="#e05050" /><path d="M18 12h2v6h-2z" fill="#4080d0" />
        </svg>
      </Task>
      <div className="w-px" />
      <Task active open>
        <span className="bg-[#fbf9f2] w-6 h-[27px] flex items-center justify-center"><Logo size={24} /></span>
      </Task>
      <div className="ml-auto w-[64px] text-[11px] leading-[18px] text-center pt-[2px]">
        <div>15:57</div>
        <div className="-mt-px">28.08.2019</div>
      </div>
    </div>
  );
}

export default function App() {
  return (
    <div className="relative w-[1919px] h-[1199px] overflow-hidden bg-[#00142e] text-black text-[11px] font-['DejaVu_Sans_Condensed','DejaVu_Sans',sans-serif]">
      <Wallpaper />
      <AsyncWindow />
      <MainWindow />
      <ParametersWindow />
      <Taskbar />
    </div>
  );
}
